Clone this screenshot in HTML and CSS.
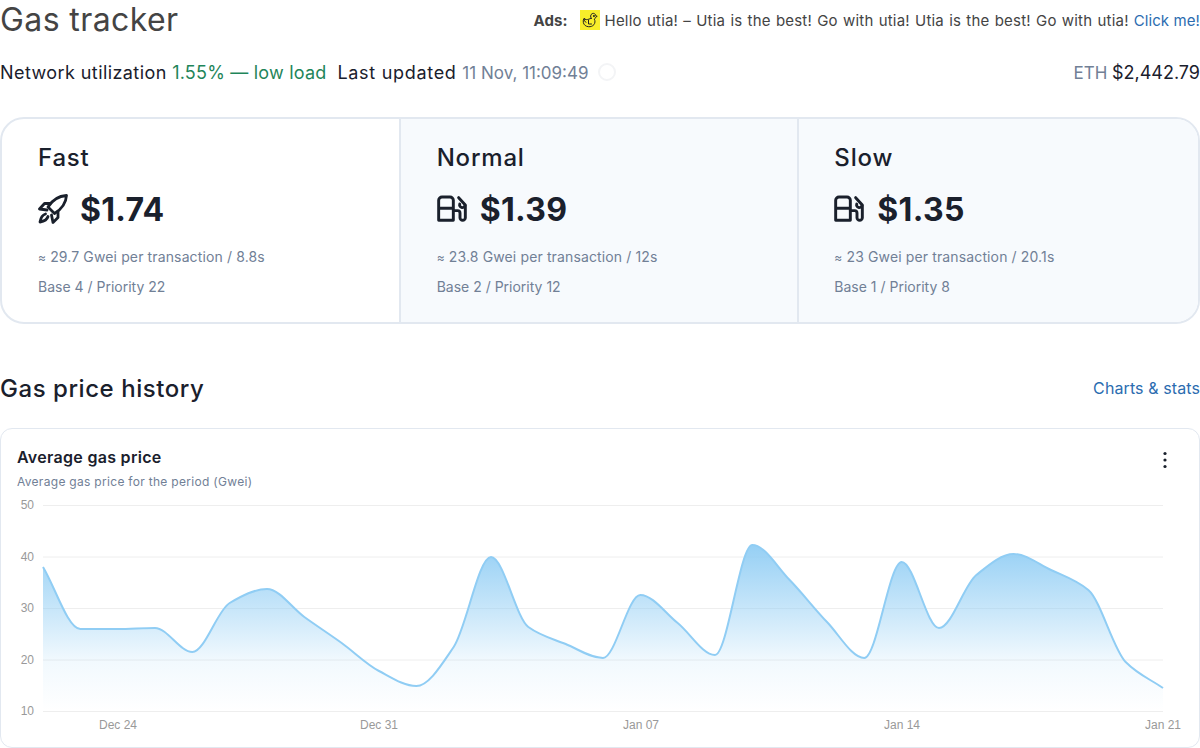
FILE: index.html
```html
<!DOCTYPE html>
<html lang="en">
<head>
  <meta charset="UTF-8">
  <title>Gas tracker</title>
  <link rel="stylesheet" href="styles.css">
</head>
<body>
  <!-- Title and ad -->
  <div class="top-row">
    <h1 class="page-title">Gas tracker</h1>
    <div class="ad">
      <b class="ad-label">Ads:</b>
      <span class="ad-duck">
        <svg viewBox="0 0 20 20" width="20" height="20" fill="none" stroke="#222" stroke-width="1" stroke-linecap="round" stroke-linejoin="round">
          <path d="M11.200 8.300c-.9-1.200-1-3.600 1-4.700 1.800-.8 3.500.5 3.500 2.100l1.500.6-1.700 1c-.2.8-.6 1.400-1.200 1.800 1 1.700.9 4-.4 5.600-1.300 1.500-3.300 2.200-5.400 2-2.500-.2-4.800-1.700-5.200-4.400-.2-1.400 0-2.900.7-4 .6.800 1.300 1.300 2.300 1.300 1.500 0 3-.6 5-1.300z"/>
          <path d="M4.500 8.700c-.6 1.500 0 3 1.500 3.600"/>
          <path d="M8.500 10v4h3"/>
          <circle cx="13.800" cy="6" r=".5" fill="#222"/>
        </svg>
      </span>
      <span class="ad-text">Hello utia! – Utia is the best! Go with utia! Utia is the best! Go with utia!</span>
      <a class="link" href="#">Click me!</a>
    </div>
  </div>

  <!-- Network status -->
  <div class="status-row">
    <div class="status-left">
      <span class="label">Network utilization <span class="green">1.55% — low load</span></span>
      <span class="label wide">Last updated <span class="muted">11 Nov, 11:09:49</span></span>
      <span class="spinner"></span>
    </div>
    <div class="eth"><span class="muted">ETH</span> <span class="eth-price">$2,442.79</span></div>
  </div>

  <!-- Gas prices -->
  <div class="gas-cards">
    <div class="gas-card">
      <div class="gas-name">Fast</div>
      <div class="gas-price">
        <svg class="gas-icon rocket" viewBox="0 0 30 30">
          <path d="M28.500 1.500C21 2 14 6.500 10 13l6.500 6.500C23 15.500 28 9 28.500 1.500z"/>
          <path d="M12 9.500H6.500L1.500 15 9 16"/>
          <path d="M20 17.500v6L15 28.500 13.500 21"/>
          <path d="M7.500 20C4 21 2.500 25 2 28c3-.5 7-2 8-5.500"/>
        </svg>
        $1.74
      </div>
      <p class="gas-note approx"><span class="approx-sign">≈</span> 29.7 Gwei per transaction / 8.8s</p>
      <p class="gas-note">Base 4 / Priority 22</p>
    </div>
    <div class="gas-card alt">
      <div class="gas-name">Normal</div>
      <div class="gas-price">
        <svg class="gas-icon" viewBox="0 0 24 24">
          <path d="M2 20.500V5.500A2.500 2.500 0 0 1 4.500 3h6A2.500 2.500 0 0 1 13 5.500v15zM2 11.500h11"/>
          <path d="M17 3.500l5 5.500v9.500a2 2 0 0 1-4 0V15a1.800 1.800 0 0 0-1.800-1.800H13"/>
          <path d="M17.800 8.300a1.900 1.900 0 0 0 3.900 1.200"/>
        </svg>
        $1.39
      </div>
      <p class="gas-note approx"><span class="approx-sign">≈</span> 23.8 Gwei per transaction / 12s</p>
      <p class="gas-note">Base 2 / Priority 12</p>
    </div>
    <div class="gas-card alt last">
      <div class="gas-name">Slow</div>
      <div class="gas-price">
        <svg class="gas-icon" viewBox="0 0 24 24">
          <path d="M2 20.500V5.500A2.500 2.500 0 0 1 4.500 3h6A2.500 2.500 0 0 1 13 5.500v15zM2 11.500h11"/>
          <path d="M17 3.500l5 5.500v9.500a2 2 0 0 1-4 0V15a1.800 1.800 0 0 0-1.800-1.800H13"/>
          <path d="M17.800 8.300a1.900 1.900 0 0 0 3.900 1.200"/>
        </svg>
        $1.35
      </div>
      <p class="gas-note approx"><span class="approx-sign">≈</span> 23 Gwei per transaction / 20.1s</p>
      <p class="gas-note">Base 1 / Priority 8</p>
    </div>
  </div>

  <!-- History -->
  <div class="section-head">
    <h2 class="section-title">Gas price history</h2>
    <a class="link" href="#">Charts &amp; stats</a>
  </div>

  <div class="chart-card">
    <div class="chart-head">
      <div>
        <div class="chart-title">Average gas price</div>
        <div class="chart-sub">Average gas price for the period (Gwei)</div>
      </div>
      <svg class="chart-menu" viewBox="0 0 24 24" width="24" height="24" fill="#1a202c">
        <circle cx="12" cy="5.500" r="1.600"/>
        <circle cx="12" cy="12" r="1.600"/>
        <circle cx="12" cy="18.500" r="1.600"/>
      </svg>
    </div>
    <svg class="chart" viewBox="1 496 1198 251" width="1198" height="251">
      <defs>
        <linearGradient id="area-fill" gradientUnits="userSpaceOnUse" x1="0" y1="545" x2="0" y2="711">
          <stop offset="0" stop-color="#90cdf4" stop-opacity="0.95"/>
          <stop offset="0.4" stop-color="#90cdf4" stop-opacity="0.48"/>
          <stop offset="0.7" stop-color="#90cdf4" stop-opacity="0.12"/>
          <stop offset="1" stop-color="#90cdf4" stop-opacity="0"/>
        </linearGradient>
      </defs>
      <g class="grid">
        <line x1="43" x2="1163" y1="505.500" y2="505.500"/>
        <line x1="43" x2="1163" y1="557" y2="557"/>
        <line x1="43" x2="1163" y1="608.500" y2="608.500"/>
        <line x1="43" x2="1163" y1="660" y2="660"/>
        <line x1="43" x2="1163" y1="711.500" y2="711.500"/>
      </g>
      <path id="area" fill="url(#area-fill)"/>
      <path id="line" class="line"/>
      <g class="axis">
        <text x="34" y="509" text-anchor="end">50</text>
        <text x="34" y="561" text-anchor="end">40</text>
        <text x="34" y="612" text-anchor="end">30</text>
        <text x="34" y="664" text-anchor="end">20</text>
        <text x="34" y="715" text-anchor="end">10</text>
        <text x="118" y="729" text-anchor="middle">Dec 24</text>
        <text x="379" y="729" text-anchor="middle">Dec 31</text>
        <text x="641" y="729" text-anchor="middle">Jan 07</text>
        <text x="902" y="729" text-anchor="middle">Jan 14</text>
        <text x="1163" y="729" text-anchor="middle">Jan 21</text>
      </g>
    </svg>
  </div>

  <script src="chart.js"></script>
</body>
</html>
```

FILE: styles.css
```css
body {
  margin: 0;
  height: 748px;
  overflow: hidden;
  background: #fff;
  color: #1a202c;
  font-family: 'Inter', 'Liberation Sans', sans-serif;
}

.link {
  color: #2b6cb0;
  text-decoration: none;
}

.green {
  color: #1f855a;
  letter-spacing: 0.2px;
}

.muted {
  color: #718096;
  font-size: 17px;
  letter-spacing: 0;
}

/* Title and ad */
.top-row {
  display: flex;
  justify-content: space-between;
  align-items: center;
  height: 40px;
}

.page-title {
  margin: 0;
  font-size: 32px;
  font-weight: 400;
  letter-spacing: 0.4px;
  line-height: 40px;
  color: #444;
}

.ad {
  display: flex;
  align-items: center;
  gap: 5px;
  font-size: 15px;
  color: #444;
}

.ad-label {
  margin-right: 7px;
  font-weight: 700;
  letter-spacing: 0.1px;
}

.ad-duck {
  display: flex;
  width: 20px;
  height: 20px;
  background: #f8ee2a;
}

.ad-text {
  letter-spacing: 0.2px;
  word-spacing: 0.8px;
}

.ad .link {
  letter-spacing: 0.1px;
}

/* Network status */
.status-row {
  display: flex;
  justify-content: space-between;
  align-items: center;
  height: 24px;
  margin: 20px 0 33px;
  font-size: 18px;
}

.status-left {
  display: flex;
  align-items: center;
  gap: 11px;
}

.label {
  letter-spacing: 0.42px;
}

.label.wide {
  letter-spacing: 0.7px;
}

.spinner {
  width: 14px;
  height: 14px;
  margin-left: -2px;
  border: 2px solid #f3f4f6;
  border-radius: 50%;
}

.eth {
  font-size: 16px;
}

.eth-price {
  font-size: 18px;
}

/* Gas prices */
.gas-cards {
  display: grid;
  grid-template-columns: repeat(3, 1fr);
  height: 203px;
  border: 2px solid #e2e8f0;
  border-radius: 24px;
  overflow: hidden;
}

.gas-card {
  padding: 21px 36px 0;
  border-right: 2px solid #e2e8f0;
}

.gas-card.alt {
  background: #f7fafd;
}

.gas-card.last {
  padding-left: 35px;
  border-right: none;
}

.gas-name {
  font-size: 24px;
  font-weight: 500;
  letter-spacing: 0.8px;
  line-height: 36px;
}

.gas-price {
  display: flex;
  align-items: center;
  gap: 11px;
  height: 48px;
  margin: 9px 0 14px;
  font-size: 32px;
  font-weight: 700;
  letter-spacing: 0.3px;
}

.gas-card.alt .gas-price {
  gap: 12px;
}

.gas-icon {
  width: 32px;
  height: 32px;
  margin-left: -1px;
  fill: none;
  stroke: #1a202c;
  stroke-width: 2.200;
  stroke-linecap: round;
  stroke-linejoin: round;
}

.gas-icon.rocket {
  width: 30px;
  height: 30px;
  margin: 0 1px 0 0;
  stroke-width: 2.800;
}

.gas-note {
  margin: 0 0 10px;
  font-size: 14px;
  line-height: 20px;
  color: #718096;
}

.gas-note.approx {
  letter-spacing: 0.13px;
}

.approx-sign {
  font-size: 12px;
  line-height: 1;
}

/* History */
.section-head {
  display: flex;
  justify-content: space-between;
  align-items: center;
  height: 36px;
  margin: 46px 0 22px;
}

.section-title {
  margin: 0;
  font-size: 24px;
  font-weight: 500;
  letter-spacing: 0.55px;
}

.section-head .link {
  font-size: 16px;
  letter-spacing: 0.1px;
}

.chart-card {
  height: 318px;
  border: 1px solid #e2e8f0;
  border-radius: 12px;
  overflow: hidden;
}

.chart-head {
  display: flex;
  justify-content: space-between;
  align-items: flex-start;
  height: 67px;
  box-sizing: border-box;
  padding: 16px 22px 0 16px;
}

.chart-title {
  font-size: 16px;
  font-weight: 600;
  letter-spacing: 0.3px;
  line-height: 24px;
}

.chart-sub {
  margin-top: 5px;
  font-size: 12px;
  letter-spacing: 0.3px;
  line-height: 16px;
  color: #718096;
}

.chart-menu {
  display: block;
  margin-top: 3px;
}

.chart {
  display: block;
}

.grid line {
  stroke: #eee;
  stroke-width: 1;
}

.line {
  fill: none;
  stroke: #90cdf4;
  stroke-width: 2;
}

.axis text {
  font-family: 'Liberation Sans', sans-serif;
  font-size: 12px;
  fill: #999;
}
```

FILE: chart.js
```js
// y position of each day on the chart, Dec 22 to Jan 21
const ys = [567, 629, 629, 628, 652, 603, 589, 617, 643, 671, 686, 647, 557, 627, 644, 658,
  595, 623, 655, 545, 580, 622, 658, 562, 628, 575, 554, 570, 590, 662, 688];
const startX = 43;
const step = 1120 / 30;
const baseY = 711;

const points = ys.map((y, i) => [startX + i * step, y]);

// Monotone cubic curve, so the peaks stay flat and nothing overshoots
function slopes(pts) {
  const d = [];
  for (let i = 0; i < pts.length - 1; i++) {
    d.push((pts[i + 1][1] - pts[i][1]) / (pts[i + 1][0] - pts[i][0]));
  }
  const m = [d[0]];
  for (let i = 1; i < pts.length - 1; i++) {
    m.push(d[i - 1] * d[i] <= 0 ? 0 : 2 * d[i - 1] * d[i] / (d[i - 1] + d[i]));
  }
  m.push(d[d.length - 1]);
  return m;
}

function curve(pts) {
  const m = slopes(pts);
  let path = `M${pts[0][0]} ${pts[0][1]}`;
  for (let i = 0; i < pts.length - 1; i++) {
    const h = (pts[i + 1][0] - pts[i][0]) / 3;
    path += `C${pts[i][0] + h} ${pts[i][1] + m[i] * h} ${pts[i + 1][0] - h} ${pts[i + 1][1] - m[i + 1] * h} ${pts[i + 1][0]} ${pts[i + 1][1]}`;
  }
  return path;
}

const linePath = curve(points);
document.getElementById("line").setAttribute("d", linePath);
document.getElementById("area").setAttribute("d", `${linePath}L${startX + 30 * step} ${baseY}L${startX} ${baseY}Z`);
```
